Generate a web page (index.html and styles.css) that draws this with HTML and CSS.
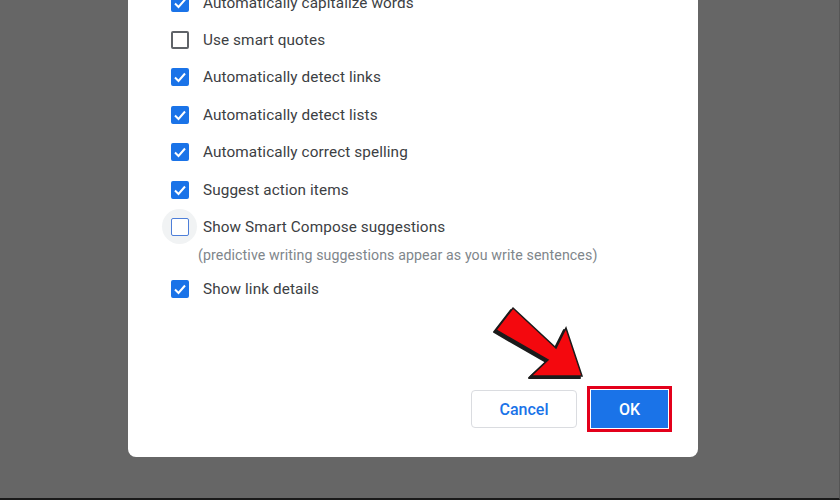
FILE: index.html
```html
<!DOCTYPE html>
<html>
<head>
    <title>Preferences</title>
    <link rel="stylesheet" href="styles.css">
</head>
<body>
    <div class="screen">
        <div class="dialog">
            <div class="options">
                <label class="option">
                    <span class="box checked"><svg viewBox="0 0 18 18"><polyline points="4,9.5 7.5,13 14,5.5"/></svg></span>
                    <span class="option-label">Automatically capitalize words</span>
                </label>
                <label class="option">
                    <span class="box"></span>
                    <span class="option-label">Use smart quotes</span>
                </label>
                <label class="option">
                    <span class="box checked"><svg viewBox="0 0 18 18"><polyline points="4,9.5 7.5,13 14,5.5"/></svg></span>
                    <span class="option-label">Automatically detect links</span>
                </label>
                <label class="option">
                    <span class="box checked"><svg viewBox="0 0 18 18"><polyline points="4,9.5 7.5,13 14,5.5"/></svg></span>
                    <span class="option-label">Automatically detect lists</span>
                </label>
                <label class="option">
                    <span class="box checked"><svg viewBox="0 0 18 18"><polyline points="4,9.5 7.5,13 14,5.5"/></svg></span>
                    <span class="option-label">Automatically correct spelling</span>
                </label>
                <label class="option">
                    <span class="box checked"><svg viewBox="0 0 18 18"><polyline points="4,9.5 7.5,13 14,5.5"/></svg></span>
                    <span class="option-label">Suggest action items</span>
                </label>
                <label class="option">
                    <span class="box focused"></span>
                    <span class="option-label">Show Smart Compose suggestions</span>
                </label>
                <div class="option-hint">(predictive writing suggestions appear as you write sentences)</div>
                <label class="option after-hint">
                    <span class="box checked"><svg viewBox="0 0 18 18"><polyline points="4,9.5 7.5,13 14,5.5"/></svg></span>
                    <span class="option-label">Show link details</span>
                </label>
            </div>

            <div class="dialog-actions">
                <button class="btn btn-cancel">Cancel</button>
                <div class="ok-frame">
                    <button class="btn btn-ok">OK</button>
                </div>
            </div>

            <!-- annotation arrow pointing at OK -->
            <svg class="arrow" viewBox="488 300 100 85">
                <polygon class="arrow-shadow" points="513,308 556,348 566,328 582,376 531,376 548,360 496,330"/>
                <polygon class="arrow-body" points="513,308 556,348 566,328 582,376 531,376 548,360 496,330"/>
            </svg>
        </div>
    </div>
</body>
</html>
```

FILE: styles.css
```css
body {
    margin: 0;
    background-color: #666666;
    font-family: Roboto, 'Liberation Sans', Arial, sans-serif;
}

.screen {
    height: 500px;
    box-sizing: border-box;
    border-bottom: 2px solid #1a1a1a;
    border-right: 1px solid #555;
    overflow: hidden;
}

.dialog {
    position: relative;
    z-index: 0;
    width: 570px;
    height: 457px;
    margin-left: 128px;
    background-color: white;
    border-radius: 0 0 8px 8px;
    display: flex;
    flex-direction: column;
}

.options {
    margin-top: -16px;
    padding-left: 43px;
}

.option {
    display: flex;
    align-items: center;
    height: 37.4px;
}

.option.after-hint {
    margin-top: 6.5px;
}

.box {
    position: relative;
    width: 18px;
    height: 18px;
    box-sizing: border-box;
    border: 2px solid #5f6368;
    border-radius: 2px;
    flex-shrink: 0;
}

.box.checked {
    background-color: #1a73e8;
    border-color: #1a73e8;
}

.box svg {
    position: absolute;
    left: -2px;
    top: -2px;
    width: 18px;
    height: 18px;
    fill: none;
    stroke: white;
    stroke-width: 2;
}

.box.focused {
    border-color: #4e7fd9;
    border-width: 1.5px;
    background-color: #fff;
}

.box.focused::before {
    content: '';
    position: absolute;
    left: -10px;
    top: -10px;
    width: 35px;
    height: 35px;
    border-radius: 50%;
    background-color: #f1f3f4;
    z-index: -1;
}

.option-label {
    margin-left: 14px;
    font-size: 15.3px;
    color: #3c4043;
    letter-spacing: 0.1px;
}

.option-hint {
    margin-left: 27px;
    font-size: 14.2px;
    line-height: 18px;
    color: #80868b;
    letter-spacing: 0.1px;
}

.dialog-actions {
    display: flex;
    justify-content: flex-end;
    align-items: center;
    gap: 10px;
    margin-top: auto;
    padding: 0 26px 25px 0;
}

.btn {
    font-family: Roboto, 'Liberation Sans', Arial, sans-serif;
    font-size: 16px;
    font-weight: 500;
    border-radius: 4px;
    height: 38px;
    cursor: pointer;
}

.btn-cancel {
    width: 106px;
    background-color: white;
    color: #1a73e8;
    border: 1px solid #dadce0;
}

.ok-frame {
    border: 3px solid #e3001b;
    padding: 1px;
    background-color: white;
}

.btn-ok {
    display: block;
    width: 77px;
    background-color: #1a73e8;
    color: white;
    border: none;
    border-radius: 0;
}

.arrow {
    position: absolute;
    left: 360px;
    top: 300px;
    width: 100px;
    height: 85px;
}

.arrow-shadow {
    fill: #1b1b1b;
    stroke: #1b1b1b;
    stroke-width: 2;
    stroke-linejoin: round;
    transform: translate(-2px, 2px);
}

.arrow-body {
    fill: #f4080e;
    stroke: #1b1b1b;
    stroke-width: 1.5;
    stroke-linejoin: miter;
}
```
